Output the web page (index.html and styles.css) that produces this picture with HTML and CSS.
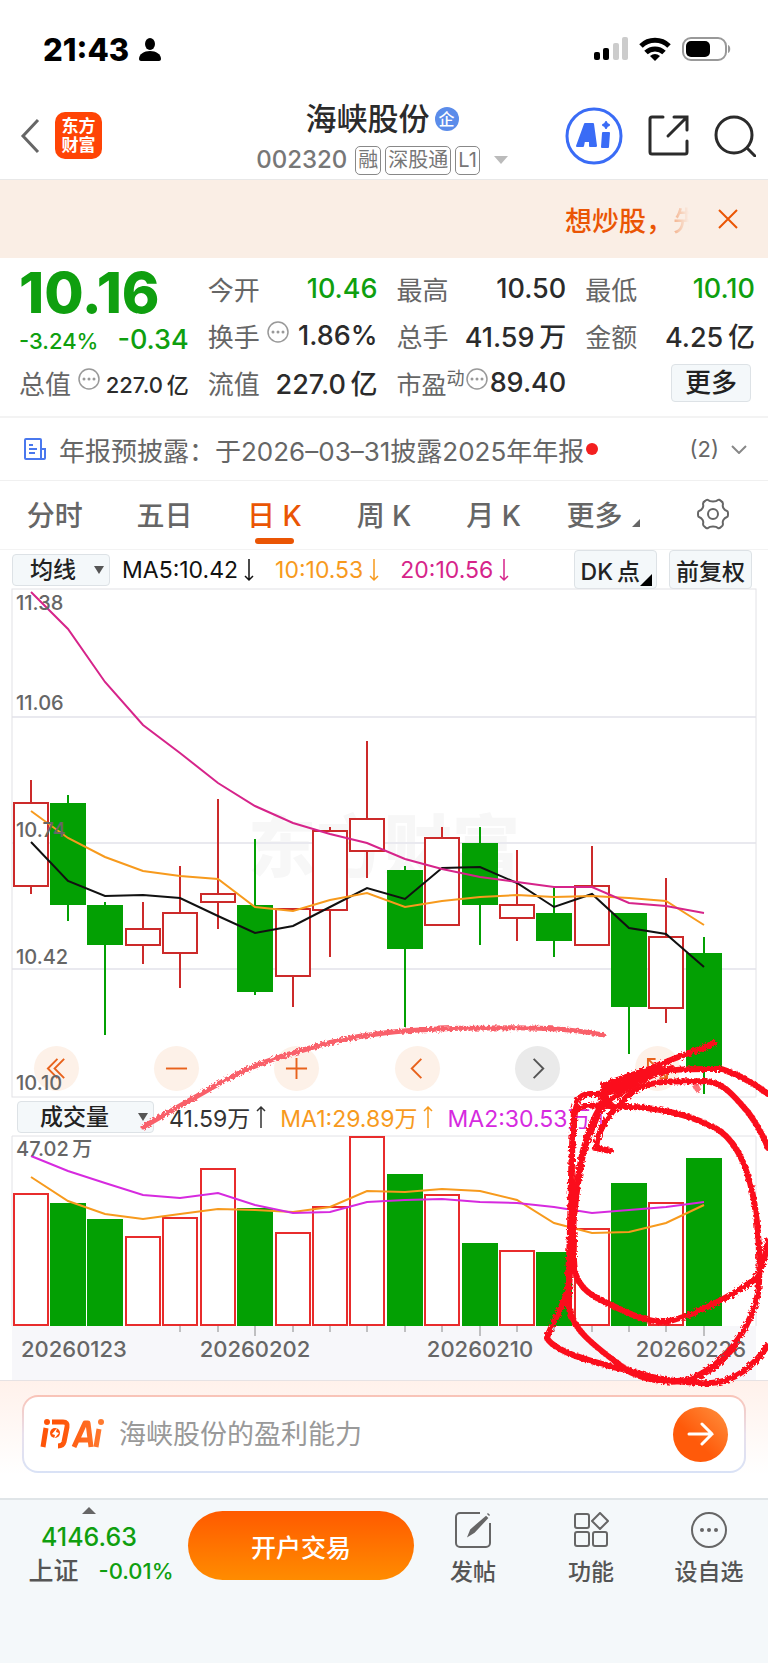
FILE: index.html
```html
<!DOCTYPE html>
<html lang="zh-CN">
<head>
  <meta charset="UTF-8">
  <meta name="viewport" content="width=device-width, initial-scale=1.0">
  <title>海峡股份 002320</title>
  <link rel="stylesheet" href="styles.css">
</head>
<body>

  <!-- 状态栏 -->
  <div class="status">
    <span class="time">21:43</span>
    <svg class="person" width="22" height="23" viewBox="0 0 22 23"><ellipse cx="11" cy="6" rx="5" ry="6"/><path d="M0 21c0-5 5-8 11-8s11 3 11 8c0 1-1 2-2 2H2c-1 0-2-1-2-2z"/></svg>
    <div class="status-right">
      <svg width="34" height="23" viewBox="0 0 34 23"><rect y="15" width="6" height="8" rx="2"/><rect x="9" y="11" width="6" height="12" rx="2"/><rect x="19" y="6" width="6" height="17" rx="2" fill="#ccc"/><rect x="28" width="6" height="23" rx="2" fill="#ccc"/></svg>
      <svg width="32" height="24" viewBox="0 0 32 24"><g fill="none" stroke="#000" stroke-width="5"><path d="M2 9a20 20 0 0 1 28 0"/><path d="M7 15.500a13 13 0 0 1 18 0"/></g><path d="M11 19a8 8 0 0 1 10 0L16 24z"/></svg>
      <svg width="49" height="24" viewBox="0 0 49 24"><rect x="1" y="1" width="43" height="22" rx="8" fill="none" stroke="#999" stroke-width="2"/><rect x="4" y="4" width="24" height="16" rx="5"/><path d="M46 8c3 1 3 7 0 8z" fill="#999"/></svg>
    </div>
  </div>

  <!-- 标题 -->
  <header class="header">
    <div class="header-left">
      <a href="#" class="back" aria-label="返回"><svg width="20" height="36" viewBox="0 0 20 36"><path d="M18 2 3 18l15 16"/></svg></a>
      <a href="#" class="logo">东方<br>财富</a>
    </div>
    <div class="title">
      <h1>海峡股份<span class="qi">企</span></h1>
      <div class="code">
        <span>002320</span>
        <span class="tags"><i>融</i><i>深股通</i><i>L1</i></span>
        <svg width="14" height="8" viewBox="0 0 14 8"><path d="M0 0h14L7 8z" fill="#bbb"/></svg>
      </div>
    </div>
    <div class="header-right">
      <button aria-label="AI"><svg width="58" height="58" viewBox="0 0 58 58"><circle cx="29" cy="29" r="27" fill="none" stroke="#3a6cf6" stroke-width="3"/><g fill="#3a6cf6" stroke="#3a6cf6" stroke-width="2" stroke-linejoin="round"><path fill-rule="evenodd" d="M12 39 20 17h8l3 22h-6v-5h-6l-1 5zM22 28h3l-1-5z"/><path d="M38 26h6l-1 14h-6z"/><path d="M41 15l1 2 2 1-2 1-1 2-1-2-2-1 2-1z"/></g></svg></button>
      <button aria-label="分享"><svg width="41" height="41" viewBox="0 0 41 41" class="line"><path d="M15 2H4a2 2 0 0 0-2 2v33a2 2 0 0 0 2 2h33a2 2 0 0 0 2-2V26"/><path d="M26 2h13v13M38 3 20 21"/></svg></button>
      <button aria-label="搜索"><svg width="42" height="42" viewBox="0 0 42 42" class="line"><circle cx="20" cy="20" r="18"/><path d="m33 33 8 8"/></svg></button>
    </div>
  </header>

  <!-- 滚动广告 -->
  <div class="banner">
    <a href="#">想炒股，<span class="fade">先</span></a>
    <button aria-label="关闭"><svg width="20" height="20" viewBox="0 0 20 20"><path d="m1 1 18 18M19 1 1 19"/></svg></button>
  </div>

  <!-- 行情 -->
  <section class="quote">
    <div class="col">
      <div class="price">10.16</div>
      <div class="change"><span>-3.24%</span><b>-0.34</b></div>
      <div class="cell small"><span>总值</span><svg class="dots"><use href="#dots"/></svg><b>227.0&thinsp;亿</b></div>
    </div>
    <div class="col">
      <div class="cell"><span>今开</span><b class="green">10.46</b></div>
      <div class="cell"><span>换手</span><svg class="dots"><use href="#dots"/></svg><b>1.86%</b></div>
      <div class="cell"><span>流值</span><b>227.0&thinsp;亿</b></div>
    </div>
    <div class="col">
      <div class="cell"><span>最高</span><b>10.50</b></div>
      <div class="cell"><span>总手</span><b>41.59&thinsp;万</b></div>
      <div class="cell pe"><span>市盈<sup>动</sup></span><svg class="dots"><use href="#dots"/></svg><b>89.40</b></div>
    </div>
    <div class="col">
      <div class="cell"><span>最低</span><b class="green">10.10</b></div>
      <div class="cell"><span>金额</span><b>4.25&thinsp;亿</b></div>
      <div class="cell"><button class="more">更多</button></div>
    </div>
  </section>

  <a href="#" class="notice">
    <svg width="22" height="22" viewBox="0 0 22 22"><path d="M17 21V2a1 1 0 0 0-1-1H2a1 1 0 0 0-1 1v18a1 1 0 0 0 1 1h18a1 1 0 0 0 1-1v-9h-4M5 7h4M5 11h8M5 15h6"/></svg>
    <span class="notice-text">年报预披露：于2026–03–31披露2025年年报</span>
    <i class="red-dot"></i>
    <span class="count">(2)</span>
    <svg class="down" width="16" height="9" viewBox="0 0 16 9"><path d="m1 1 7 7 7-7"/></svg>
  </a>

  <nav class="tabs">
    <a href="#">分时</a>
    <a href="#">五日</a>
    <a href="#" class="active">日 K</a>
    <a href="#">周 K</a>
    <a href="#">月 K</a>
    <a href="#">更多<svg class="corner" width="8" height="8" viewBox="0 0 8 8"><path d="M8 0v8H0z"/></svg></a>
    <a href="#" aria-label="设置"><svg width="32" height="32" viewBox="0 0 32 32" class="gear"><path d="M11 2c2 2 8 2 10 0q1-1 3 1 2 1 2 3c-1 3 1 6 4 7q1 0 1 3t-1 3c-3 1-5 4-4 7q0 2-2 3-2 2-3 1c-2-2-8-2-10 0q-1 1-3-1-2-1-2-3c1-3-1-6-4-7q-1 0-1-3t1-3c3-1 5-4 4-7q0-2 2-3 2-2 3-1z"/><circle cx="16" cy="16" r="5"/></svg></a>
  </nav>

  <!-- K线 -->
  <div class="bar">
    <span class="select"><select aria-label="主图指标"><option>均线</option></select></span>
    <span class="ma black">MA5:10.42<svg class="arrow"><use href="#arrow-down"/></svg></span>
    <span class="ma orange">10:10.53<svg class="arrow"><use href="#arrow-down"/></svg></span>
    <span class="ma pink">20:10.56<svg class="arrow"><use href="#arrow-down"/></svg></span>
    <div class="bar-right">
      <button class="dk">DK&thinsp;点<svg width="12" height="12" viewBox="0 0 12 12"><path d="M12 0v12H0z"/></svg></button>
      <button>前复权</button>
    </div>
  </div>

  <section class="charts">
    <div class="kline">
      <div class="tools">
        <button aria-label="最早"><svg viewBox="0 0 24 24"><path d="M13 2 3 12l10 10M20 2 10 12l10 10"/></svg></button>
        <button aria-label="缩小"><svg viewBox="0 0 24 24"><path d="M1 12h22"/></svg></button>
        <button aria-label="放大"><svg viewBox="0 0 24 24"><path d="M1 12h22M12 1v22"/></svg></button>
        <button aria-label="向左"><svg viewBox="0 0 24 24"><path d="M16 2 6 12l10 10"/></svg></button>
        <button aria-label="向右" class="gray"><svg viewBox="0 0 24 24"><path d="m8 2 10 10L8 22"/></svg></button>
        <button aria-label="全屏"><svg viewBox="0 0 24 24"><path d="M2 10V2h8M2 2l20 20M22 14v8h-8"/></svg></button>
      </div>
      <svg class="plot" viewBox="0 0 744 508">
        <text class="watermark" x="372" y="283">东方财富</text>
        <path class="grid" d="M0 128h744M0 254h744M0 380h744"/>
        <rect class="frame" x="0" y="0" width="744" height="508"/>
        <g class="up">
          <path d="M19 191v23M19 297v8M131 313v27M131 356v19M168 277v47M168 364v35M206 210v95M206 313v27M281 387v31M318 238v4M318 321v47M355 152v78M355 262v27M430 238v11M505 261v55M505 329v23M580 257v40M654 289v59M654 419v15"/>
          <rect x="2" y="214" width="34" height="83"/>
          <rect x="114" y="340" width="34" height="16"/>
          <rect x="151" y="324" width="34" height="40"/>
          <rect x="189" y="305" width="34" height="8"/>
          <rect x="264" y="320" width="34" height="67"/>
          <rect x="301" y="242" width="34" height="79"/>
          <rect x="338" y="230" width="34" height="32"/>
          <rect x="413" y="249" width="34" height="87"/>
          <rect x="488" y="316" width="34" height="13"/>
          <rect x="563" y="297" width="34" height="59"/>
          <rect x="637" y="348" width="34" height="71"/>
        </g>
        <g class="down-k">
          <path d="M56 206v126M93 313v133M243 250v156M393 277v161M468 238v118M542 298v70M617 324v141M692 348v157"/>
          <rect x="38" y="214" width="36" height="102"/>
          <rect x="75" y="316" width="36" height="40"/>
          <rect x="225" y="316" width="36" height="87"/>
          <rect x="375" y="281" width="36" height="79"/>
          <rect x="450" y="254" width="36" height="62"/>
          <rect x="524" y="324" width="36" height="28"/>
          <rect x="599" y="324" width="36" height="94"/>
          <rect x="674" y="364" width="36" height="117"/>
        </g>
        <polyline class="l-black" points="19,253 56,292 93,307 131,306 168,309 206,327 243,344 281,337 318,318 355,299 393,310 430,279 468,278 505,294 542,318 580,305 617,339 654,345 692,378"/>
        <polyline class="l-orange" points="19,222 56,249 93,268 131,282 168,287 206,290 243,318 281,322 318,311 355,304 393,318 430,312 468,308 505,306 542,308 580,307 617,309 654,312 692,336"/>
        <polyline class="l-pink" points="19,3 56,40 93,93 131,136 168,164 206,194 243,217 281,234 318,245 355,254 393,270 430,280 468,288 505,293 542,298 580,298 617,314 654,317 692,324"/>
        <g class="label">
          <text x="4" y="21">11.38</text>
          <text x="4" y="121">11.06</text>
          <text x="4" y="248">10.74</text>
          <text x="4" y="375">10.42</text>
          <text x="4" y="501">10.10</text>
        </g>
      </svg>
    </div>

    <!-- 成交量 -->
    <div class="bar vol-bar">
      <span class="select wide"><select aria-label="副图指标"><option>成交量</option></select></span>
      <span class="ma dark">41.59万<svg class="arrow"><use href="#arrow-up"/></svg></span>
      <span class="ma orange">MA1:29.89万<svg class="arrow"><use href="#arrow-up"/></svg></span>
      <span class="ma purple">MA2:30.53万<svg class="arrow"><use href="#arrow-up"/></svg></span>
    </div>
    <div class="volume">
      <svg class="plot" viewBox="0 0 744 244">
        <rect x="0" y="190" width="744" height="54" fill="#f7f7fa"/>
        <path class="frame" d="M0 190V0h744v190"/>
        <path class="tick" d="M168 190v6M206 190v6M281 190v6M318 190v6M355 190v6M393 190v6M430 190v6M505 190v6M542 190v6M580 190v6M617 190v6M654 190v6M243 190v10M468 190v10M692 190v10"/>
        <g class="up vol">
          <rect x="2" y="58" width="34" height="131"/>
          <rect x="114" y="101" width="34" height="88"/>
          <rect x="151" y="82" width="34" height="107"/>
          <rect x="189" y="33" width="34" height="156"/>
          <rect x="264" y="97" width="34" height="92"/>
          <rect x="301" y="71" width="34" height="118"/>
          <rect x="338" y="1" width="34" height="188"/>
          <rect x="413" y="59" width="34" height="130"/>
          <rect x="488" y="115" width="34" height="74"/>
          <rect x="563" y="93" width="34" height="96"/>
          <rect x="637" y="67" width="34" height="122"/>
        </g>
        <g class="down-k">
          <rect x="38" y="67" width="36" height="123"/>
          <rect x="75" y="83" width="36" height="107"/>
          <rect x="225" y="72" width="36" height="118"/>
          <rect x="375" y="38" width="36" height="152"/>
          <rect x="450" y="107" width="36" height="83"/>
          <rect x="524" y="116" width="36" height="74"/>
          <rect x="599" y="47" width="36" height="143"/>
          <rect x="674" y="22" width="36" height="168"/>
        </g>
        <polyline class="l-orange" points="19,41 56,65 93,78 131,83 168,78 206,73 243,74 281,76 318,71 355,55 393,56 430,53 468,55 505,64 542,87 580,97 617,96 654,87 692,69"/>
        <polyline class="l-purple" points="19,20 56,35 93,47 131,59 168,62 206,57 243,69 281,77 318,76 355,66 393,64 430,63 468,66 505,67 542,71 580,77 617,74 654,71 692,66"/>
        <g class="label">
          <text x="4" y="20">47.02&thinsp;万</text>
        </g>
        <g class="date">
          <text x="9" y="221">20260123</text>
          <text x="243" y="221" text-anchor="middle">20260202</text>
          <text x="468" y="221" text-anchor="middle">20260210</text>
          <text x="734" y="221" text-anchor="end">20260226</text>
        </g>
      </svg>
    </div>

    <!-- 手绘标注 -->
    <svg class="pen" viewBox="0 589 768 791">
      <filter id="rough" x="-5%" y="-5%" width="110%" height="110%">
        <feTurbulence type="fractalNoise" baseFrequency="0.4" numOctaves="2"/>
        <feDisplacementMap in="SourceGraphic" scale="5"/>
      </filter>
      <g filter="url(#rough)">
        <path class="light" d="M143 1127Q185 1103 220 1083T300 1051Q340 1038 384 1033T490 1028Q560 1026 603 1035"/>
        <path d="M714 1043C700 1050 684 1054 661 1064C640 1075 604 1080 603 1090C603 1110 590 1130 584 1150C577 1180 572 1230 569 1283C566 1305 550 1325 547 1338C555 1352 590 1362 631 1371C660 1380 685 1384 711 1383C735 1382 755 1365 768 1345"/>
        <path d="M664 1381C690 1384 705 1372 717 1363C740 1343 758 1310 759 1283C761 1240 755 1195 747 1173C740 1150 725 1130 710 1126C690 1114 650 1107 631 1107C605 1106 580 1102 575 1112C570 1150 572 1210 574 1240C573 1270 573 1285 597 1298C625 1312 645 1322 664 1322C690 1318 730 1297 754 1280C762 1270 766 1255 768 1240"/>
        <path d="M574 1127C572 1105 578 1094 590 1094C620 1094 630 1082 651 1075C670 1068 695 1069 721 1069C738 1074 755 1084 768 1094"/>
        <path d="M611 1151L596 1148C598 1125 615 1107 631 1093C650 1078 680 1082 704 1081C725 1082 735 1098 748 1112C758 1126 764 1137 768 1148"/>
        <path d="M604 1085L606 1098C590 1120 582 1150 579 1170C572 1210 569 1270 569 1307C571 1330 600 1350 624 1368C640 1380 670 1384 687 1380C710 1375 725 1358 734 1347"/>
        <path d="M604 1090C625 1085 645 1074 661 1066M600 1110C620 1090 650 1075 672 1068"/>
        <path d="M574 1120C569 1170 572 1220 568 1275"/>
        <path d="M696 1086l2 4" stroke-opacity=".6"/>
      </g>
    </svg>
  </section>

  <!-- 问AI -->
  <section class="ask">
    <form class="ask-box">
      <svg class="ask-logo" width="64" height="30" viewBox="0 0 64 30"><defs><linearGradient id="lg" gradientUnits="userSpaceOnUse" x2="64"><stop offset=".3" stop-color="#fe5408"/><stop offset="1" stop-color="#ff7a30"/></linearGradient></defs><g fill="none" stroke="url(#lg)" stroke-width="5" stroke-linejoin="round"><path d="M6 9 3 28"/><path d="M12 3h11q5 0 4 5l-3 15q-1 4-6 4"/><path d="m34 28 11-24h3l3 24M38 21h12M59 10l-3 18"/></g><circle cx="7" cy="3" r="3" fill="#fe5408"/><circle cx="61" cy="3" r="3" fill="#ff7a30"/><circle cx="15" cy="14" r="5" fill="#fe5408"/><path d="m17 9-5 6 3 1-1 4 5-6-3-1z" fill="#fff"/></svg>
      <input type="text" aria-label="问AI" placeholder="海峡股份的盈利能力">
      <button type="button" aria-label="发送"><svg width="28" height="24" viewBox="0 0 28 24"><path d="M2 12h23M15 2l10 10-10 10"/></svg></button>
    </form>
  </section>

  <!-- 底部 -->
  <footer class="bottom">
    <a href="#" class="index">
      <svg width="14" height="7" viewBox="0 0 14 7"><path d="M7 0l7 7H0z" fill="#666"/></svg>
      <b>4146.63</b>
      <span>上证<em>-0.01%</em></span>
    </a>
    <button class="open">开户交易</button>
    <a href="#" class="item">
      <svg width="36" height="36" viewBox="0 0 36 36"><path d="M25 1H5a4 4 0 0 0-4 4v26a4 4 0 0 0 4 4h26a4 4 0 0 0 4-4V11"/><path d="M14 23 16 18 31 5 32 6 19 20z" fill="#666"/><path d="m33 3 1-1" stroke-width="3"/></svg>
      发帖
    </a>
    <a href="#" class="item">
      <svg width="36" height="36" viewBox="0 0 36 36"><rect x="2" y="2" width="14" height="14" rx="2"/><rect x="2" y="20" width="14" height="14" rx="2"/><rect x="20" y="20" width="14" height="14" rx="2"/><path d="m27 1 8 8-8 8-8-8z" stroke-linejoin="round"/></svg>
      功能
    </a>
    <a href="#" class="item">
      <svg width="36" height="36" viewBox="0 0 36 36"><circle cx="18" cy="18" r="17"/><g fill="#666" stroke="none"><circle cx="11" cy="18" r="2"/><circle cx="18" cy="18" r="2"/><circle cx="25" cy="18" r="2"/></g></svg>
      设自选
    </a>
  </footer>

  <!-- 公用图标 -->
  <svg class="defs" width="0" height="0">
    <symbol id="dots" viewBox="0 0 22 22"><circle cx="11" cy="11" r="10" fill="none" stroke="#999" stroke-width="1.500"/><circle cx="6" cy="11" r="1.500" fill="#999"/><circle cx="11" cy="11" r="1.500" fill="#999"/><circle cx="16" cy="11" r="1.500" fill="#999"/></symbol>
    <symbol id="arrow-down" viewBox="0 0 10 24"><path d="M5 1v21M1 18l4 4 4-4" fill="none" stroke="currentColor" stroke-width="1.500"/></symbol>
    <symbol id="arrow-up" viewBox="0 0 10 24"><path d="M5 23V2M1 6l4-4 4 4" fill="none" stroke="currentColor" stroke-width="1.500"/></symbol>
  </svg>
</body>
</html>
```
FILE: styles.css
```css
html {
  --green: #0f9f0f;
  --orange: #ea5504;
  --gray: #666;
  --text: #2b2b2b;
}
* {
  box-sizing: border-box;
}
body {
  margin: 0;
  min-height: 100vh;
  display: flex;
  flex-direction: column;
  background: #fff;
  color: var(--text);
  font-family: Inter, "Noto Sans CJK SC", sans-serif;
  overflow-x: hidden;
}
a {
  color: inherit;
  text-decoration: none;
}
button, select, input {
  font: inherit;
  color: inherit;
}
button {
  padding: 0;
  border: 0;
  background: none;
}
svg {
  display: block;
  flex: none;
}
i, em {
  font-style: normal;
}
.defs {
  position: absolute;
}

/* 状态栏 */
.status {
  display: flex;
  align-items: center;
  height: 98px;
  padding: 0 37px 0 43px;
  color: #000;
}
.time {
  font-size: 31px;
  font-weight: 800;
}
.person {
  margin-left: 10px;
}
.status-right {
  display: flex;
  gap: 11px;
  margin-left: auto;
}

/* 标题 */
.header {
  display: grid;
  grid-template-columns: 1fr auto 1fr;
  height: 82px;
  padding: 0 12px 0 20px;
  border-bottom: 1px solid #e8e8e8;
}
.header-left, .header-right {
  display: flex;
  align-items: center;
  padding-bottom: 6px;
}
.back path {
  fill: none;
  stroke: #666;
  stroke-width: 3;
}
.logo {
  margin-left: 15px;
  width: 47px;
  height: 47px;
  padding-top: 5px;
  border-radius: 10px;
  background: #ff4405;
  color: #fff;
  font-size: 17px;
  line-height: 19px;
  font-weight: 700;
  text-align: center;
}
.title {
  display: flex;
  flex-direction: column;
  align-items: center;
  padding-right: 12px;
}
.title h1 {
  display: flex;
  align-items: center;
  gap: 5px;
  margin: 0;
  font-size: 31px;
  line-height: 42px;
  font-weight: 500;
}
.qi {
  width: 24px;
  height: 24px;
  border-radius: 50%;
  background: #5b8cea;
  color: #fff;
  font-size: 16px;
  line-height: 24px;
  text-align: center;
}
.code {
  display: flex;
  align-items: center;
  font-size: 24px;
  line-height: 30px;
  font-weight: 500;
  color: #777;
  padding-top: 5px;
}
.tags {
  display: flex;
  gap: 4px;
  margin: 0 14px 0 8px;
}
.tags i {
  padding: 0 2px;
  border: 1px solid #888;
  border-radius: 5px;
  font-size: 20px;
  line-height: 27px;
  font-weight: 400;
}
.header-right {
  justify-content: flex-end;
  gap: 25px;
}
.line {
  fill: none;
  stroke: #2b2b2b;
  stroke-width: 3;
  stroke-linecap: round;
}

/* 广告 */
.banner {
  display: flex;
  align-items: center;
  justify-content: flex-end;
  gap: 18px;
  height: 78px;
  padding-right: 30px;
  background: #faeee5;
  color: var(--orange);
  font-size: 27px;
  font-weight: 500;
}
.fade {
  opacity: .4;
  -webkit-mask-image: linear-gradient(90deg, #000, transparent 60%);
  mask-image: linear-gradient(90deg, #000, transparent 60%);
}
.banner path {
  stroke: var(--orange);
  stroke-width: 2;
}

/* 行情 */
.quote {
  display: grid;
  grid-template-columns: repeat(4, 1fr);
  gap: 19px;
  padding: 7px 13px 10px 19px;
  border-bottom: 2px solid #f3f3f3;
}
.price {
  font-size: 57px;
  line-height: 56px;
  font-weight: 800;
  color: var(--green);
}
.change {
  display: flex;
  justify-content: space-between;
  align-items: baseline;
  height: 38px;
  line-height: 38px;
  font-size: 22px;
  font-weight: 500;
  color: var(--green);
}
.change b {
  font-size: 27px;
  font-weight: 500;
}
.cell {
  display: flex;
  align-items: center;
  height: 47px;
  font-size: 26px;
  color: var(--gray);
  white-space: nowrap;
}
.cell b {
  margin-left: auto;
  font-size: 27px;
  font-weight: 500;
  color: var(--text);
}
.cell .green {
  color: var(--green);
}
.small b {
  font-size: 22px;
}
.dots {
  width: 22px;
  height: 22px;
  margin: 0 0 8px 7px;
}
.pe {
  font-size: 25px;
}
.pe .dots {
  margin-left: 1px;
}
.pe sup {
  font-size: 18px;
  line-height: 18px;
}
.more {
  width: 80px;
  height: 38px;
  margin: 0 4px 0 auto;
  border: 1px solid #dde2e6;
  border-radius: 4px;
  background: #f4f8fa;
  color: #222;
  font-weight: 500;
  line-height: 34px;
}

/* 公告 */
.notice {
  display: flex;
  align-items: center;
  height: 63px;
  padding: 0 21px 0 24px;
  border-bottom: 1px solid #f0f0f0;
  font-size: 26px;
  color: var(--gray);
}
.notice path {
  fill: none;
  stroke: #4a78ee;
  stroke-width: 2;
}
.notice .down path {
  stroke: #888;
}
.notice-text {
  margin-left: 13px;
}
.red-dot {
  width: 12px;
  height: 12px;
  margin-left: 2px;
  border-radius: 50%;
  background: #f31f1f;
}
.count {
  margin: 0 12px 0 auto;
  font-size: 22px;
}

/* 周期 */
.tabs {
  display: grid;
  grid-template-columns: repeat(7, 1fr);
  height: 69px;
  border-bottom: 1px solid #f3f3f3;
  font-size: 28px;
  font-weight: 500;
  color: var(--gray);
}
.tabs a {
  position: relative;
  display: flex;
  align-items: center;
  justify-content: center;
  padding-bottom: 2px;
}
.tabs .active {
  color: var(--orange);
}
.active::after {
  content: "";
  position: absolute;
  bottom: 5px;
  width: 39px;
  height: 6px;
  border-radius: 3px;
  background: var(--orange);
}
.corner {
  margin: 18px 0 0 10px;
  fill: var(--gray);
}
.gear {
  fill: none;
  stroke: var(--gray);
  stroke-width: 2;
}

/* 指标栏 */
.bar {
  display: flex;
  align-items: center;
  height: 39px;
  padding: 0 16px 0 12px;
  font-size: 23px;
  white-space: nowrap;
}
.vol-bar {
  padding-left: 17px;
}
.select {
  position: relative;
  width: 98px;
  margin-right: 12px;
}
.select::after {
  content: "";
  position: absolute;
  right: 6px;
  top: 12px;
  border: 5px solid transparent;
  border-top: 8px solid #555;
  border-bottom: 0;
}
.wide {
  width: 137px;
  margin-right: 15px;
}
.select select {
  display: block;
  width: 100%;
  height: 32px;
  padding: 0 0 0 17px;
  border: 1px solid #dde2e6;
  border-radius: 4px;
  background: #f4f8fa;
  color: #222;
  font-weight: 500;
  appearance: none;
}
.wide select {
  padding-left: 22px;
}
.ma {
  display: flex;
  align-items: center;
  margin-right: 21px;
}
.vol-bar .ma {
  margin-right: 14px;
}
.arrow {
  width: 10px;
  height: 24px;
  margin-left: 6px;
}
.black { color: #111; }
.dark { color: #333; }
.orange { color: #f79a1d; }
.pink { color: #d6248a; }
.purple { color: #d62adf; }
.bar-right {
  display: flex;
  gap: 12px;
  margin-left: auto;
}
.bar-right button {
  display: flex;
  align-items: center;
  height: 39px;
  padding: 0 6px;
  border: 1px solid #dde2e6;
  border-radius: 4px;
  background: #f4f8fa;
  color: #222;
  font-weight: 500;
}
.bar-right .dk {
  padding-right: 4px;
}
.dk svg {
  margin-top: 20px;
}

/* 图表 */
.charts {
  position: relative;
}
.kline {
  position: relative;
  padding: 0 12px;
}
.volume {
  padding: 0 12px;
}
.plot {
  position: relative;
  width: 100%;
  height: auto;
  overflow: visible;
  pointer-events: none;
}
.tools {
  position: absolute;
  left: 34px;
  right: 88px;
  bottom: 6px;
  display: flex;
  justify-content: space-between;
}
.tools button {
  display: flex;
  align-items: center;
  justify-content: center;
  width: 45px;
  height: 45px;
  border-radius: 50%;
  background: #fdf1e8;
}
.tools .gray {
  background: #eaeaea;
}
.tools svg {
  width: 23px;
  height: 23px;
  fill: none;
  stroke: #e8621c;
  stroke-width: 2;
}
.tools .gray svg {
  stroke: #555;
}
.watermark {
  fill: #f7f7f7;
  font-size: 68px;
  font-weight: 900;
  text-anchor: middle;
}
.grid {
  stroke: #e9e9ef;
  stroke-width: 2;
}
.frame {
  fill: none;
  stroke: #e2e2e6;
}
.tick {
  stroke: #888;
}
.up {
  fill: none;
  stroke: #cc2a2a;
  stroke-width: 2;
}
.up rect {
  fill: #fff;
}
.vol {
  stroke: #e82c2c;
}
.down-k {
  fill: #03a003;
}
.down-k path {
  stroke: #03a003;
  stroke-width: 2;
}
polyline {
  fill: none;
  stroke-width: 2;
}
.l-black { stroke: #111; }
.l-orange { stroke: #f79a1d; }
.l-pink { stroke: #d6248a; }
.l-purple { stroke: #d62adf; }
.label {
  fill: #666;
  font-size: 20px;
  font-weight: 500;
}
.date {
  fill: #666;
  font-size: 22px;
  font-weight: 500;
}
.pen {
  position: absolute;
  left: 0;
  top: 0;
  z-index: 2;
  width: 100%;
  height: 100%;
  overflow: visible;
  pointer-events: none;
}
.pen path {
  fill: none;
  stroke: #fb0d1b;
  stroke-width: 6;
  stroke-linecap: round;
}
.pen .light {
  stroke: #f9616b;
  stroke-width: 5;
}

/* 问AI */
.ask {
  height: 118px;
  padding: 14px 22px;
  border-top: 1px solid #e6e2e4;
  background: linear-gradient(#fff1eb, #fff 80%);
}
.ask-box {
  display: flex;
  align-items: center;
  height: 78px;
  padding: 0 16px;
  border: 2px solid transparent;
  border-radius: 16px;
  background: linear-gradient(#fff, #fff) padding-box, linear-gradient(#f9c3b7, #e8e0ec, #d9e2f6) border-box;
}
.ask-box input {
  flex: 1;
  min-width: 0;
  padding: 0 0 0 15px;
  border: 0;
  outline: 0;
  background: none;
  font-size: 27px;
}
.ask-box input::placeholder {
  color: #999;
  opacity: 1;
}
.ask-box button {
  display: flex;
  align-items: center;
  justify-content: center;
  width: 55px;
  height: 55px;
  border-radius: 50%;
  background: linear-gradient(45deg, #ff5a0a 40%, #ff9240);
}
.ask-box button path {
  fill: none;
  stroke: #fff;
  stroke-width: 3;
  stroke-linecap: round;
}

/* 底部 */
.bottom {
  flex: 1;
  display: flex;
  align-items: flex-start;
  min-height: 165px;
  padding: 0 0 0 14px;
  border-top: 2px solid #e0e5e8;
  background: #f4f8fa;
  color: #555;
}
.index {
  display: flex;
  flex-direction: column;
  align-items: center;
  width: 174px;
  padding-top: 7px;
  line-height: 34px;
}
.index svg {
  margin-right: 24px;
}
.index b {
  margin: 6px 24px 0 0;
  font-size: 25px;
  font-weight: 500;
  color: var(--green);
}
.index span {
  display: flex;
  align-items: center;
  gap: 20px;
  font-size: 25px;
  font-weight: 500;
}
.index em {
  font-size: 22px;
  color: var(--green);
}
.open {
  width: 226px;
  height: 69px;
  margin: 11px 0 0;
  border-radius: 35px;
  background: linear-gradient(#ff5a00, #ff8c00);
  color: #fff;
  font-size: 25px;
  font-weight: 500;
}
.item {
  display: flex;
  flex: 1;
  flex-direction: column;
  align-items: center;
  gap: 6px;
  padding-top: 12px;
  font-size: 23px;
  line-height: 36px;
  font-weight: 500;
}
.item svg {
  fill: none;
  stroke: #666;
  stroke-width: 2;
}
```
